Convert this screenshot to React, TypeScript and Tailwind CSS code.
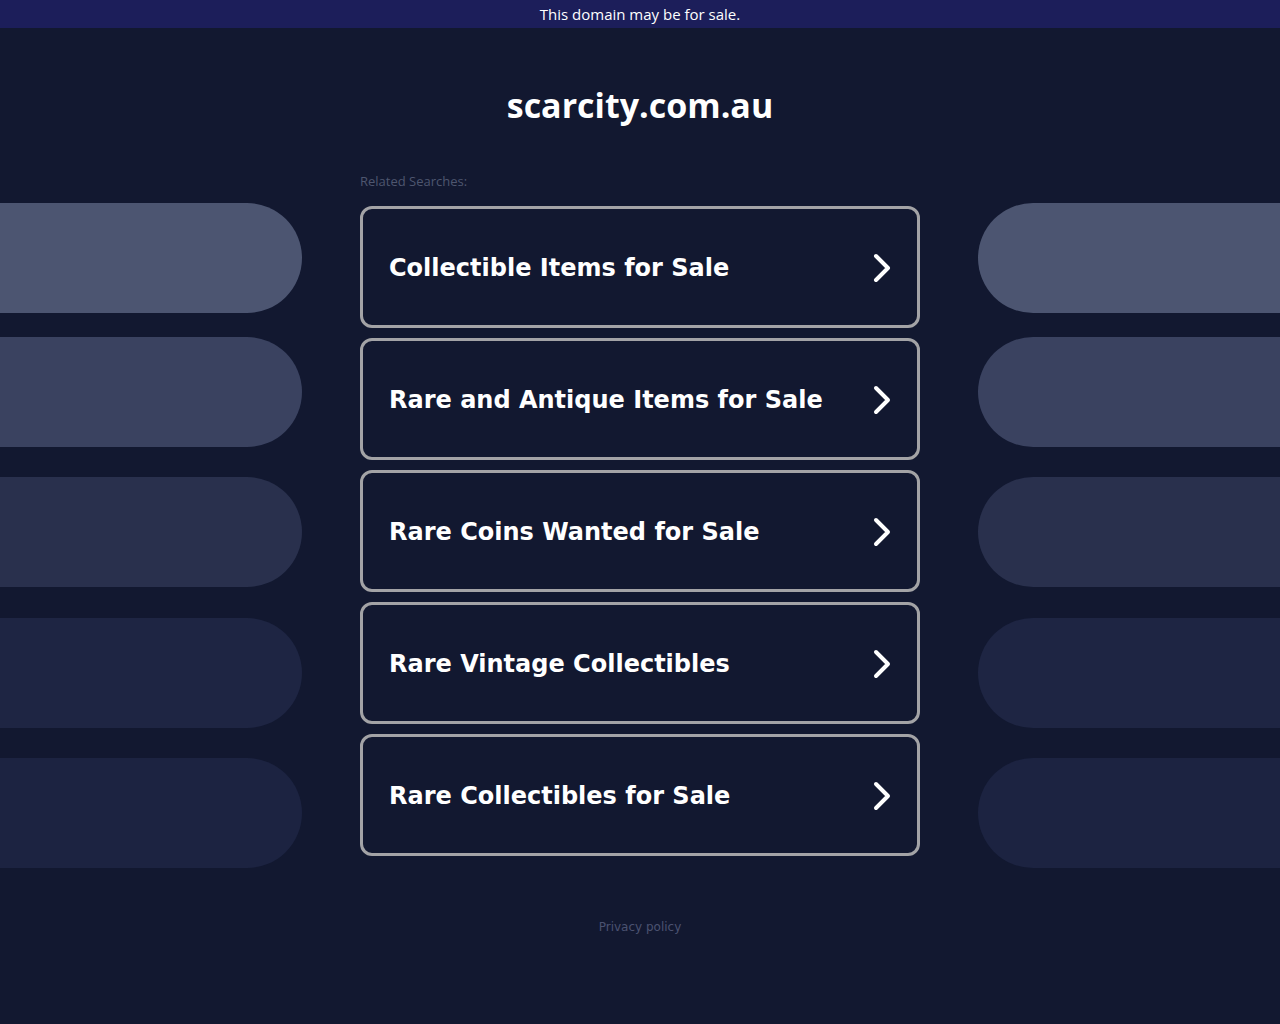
import React from 'react';

const searches = [
  'Collectible Items for Sale',
  'Rare and Antique Items for Sale',
  'Rare Coins Wanted for Sale',
  'Rare Vintage Collectibles',
  'Rare Collectibles for Sale',
];

const pills = [
  { color: 'bg-[#4c5571]', mt: 'mt-[33px]' },
  { color: 'bg-[#3a4260]', mt: 'mt-[24px]' },
  { color: 'bg-[#29304d]', mt: 'mt-[30px]' },
  { color: 'bg-[#1e2543]', mt: 'mt-[31px]' },
  { color: 'bg-[#1c2341]', mt: 'mt-[30px]' },
];

function Chevron() {
  return (
    <svg width="20" height="30" viewBox="0 0 20 30" fill="none" className="shrink-0 mt-[2px]">
      <polyline points="4,3 16,15 4,27" stroke="white" strokeWidth="4" strokeLinecap="round" strokeLinejoin="round" />
    </svg>
  );
}

function SideColumn({ side }: { side: 'left' | 'right' }) {
  return (
    <div className="w-[302px] flex flex-col">
      {pills.map((p, i) => (
        <div
          key={i}
          className={`${p.mt} h-[110px] w-full ${p.color} ${side === 'left' ? 'rounded-r-[55px]' : 'rounded-l-[55px]'}`}
        />
      ))}
    </div>
  );
}

export default function App() {
  return (
    <div className="w-full min-h-screen bg-[#121830] flex flex-col" style={{ fontFamily: '"Open Sans", sans-serif' }}>
      {/* Top bar */}
      <div className="h-7 bg-[#1c1e5a] flex items-center justify-center">
        <span className="text-[15px] text-white">This domain may be for sale.</span>
      </div>

      {/* Title */}
      <div className="pt-[56px] flex justify-center">
        <h1 className="text-[34px] leading-[42px] font-bold text-white">scarcity.com.au</h1>
      </div>

      {/* Content row */}
      <div className="mt-[44px] flex justify-between">
        <SideColumn side="left" />

        <div className="w-[560px] flex flex-col">
          <div className="pt-[3px] text-[13px] leading-4 text-[#4e566f]">Related Searches:</div>
          <div className="mt-[17px] flex flex-col gap-[10px]">
            {searches.map((s) => (
              <a
                key={s}
                href="#"
                className="h-[122px] border-[3px] border-[#a3a3a6] rounded-[12px] flex items-center justify-between pl-[26px] pr-[25px]"
              >
                <span
                  className="pt-[2px] text-[24px] font-bold text-white"
                  style={{ fontFamily: '"DejaVu Sans", sans-serif' }}
                >
                  {s}
                </span>
                <Chevron />
              </a>
            ))}
          </div>
          <div className="mt-[63px] flex justify-center">
            <a
              href="#"
              className="text-[12px] leading-4 text-[#4b5270]"
              style={{ fontFamily: '"DejaVu Sans", sans-serif' }}
            >
              Privacy policy
            </a>
          </div>
        </div>

        <SideColumn side="right" />
      </div>
    </div>
  );
}
